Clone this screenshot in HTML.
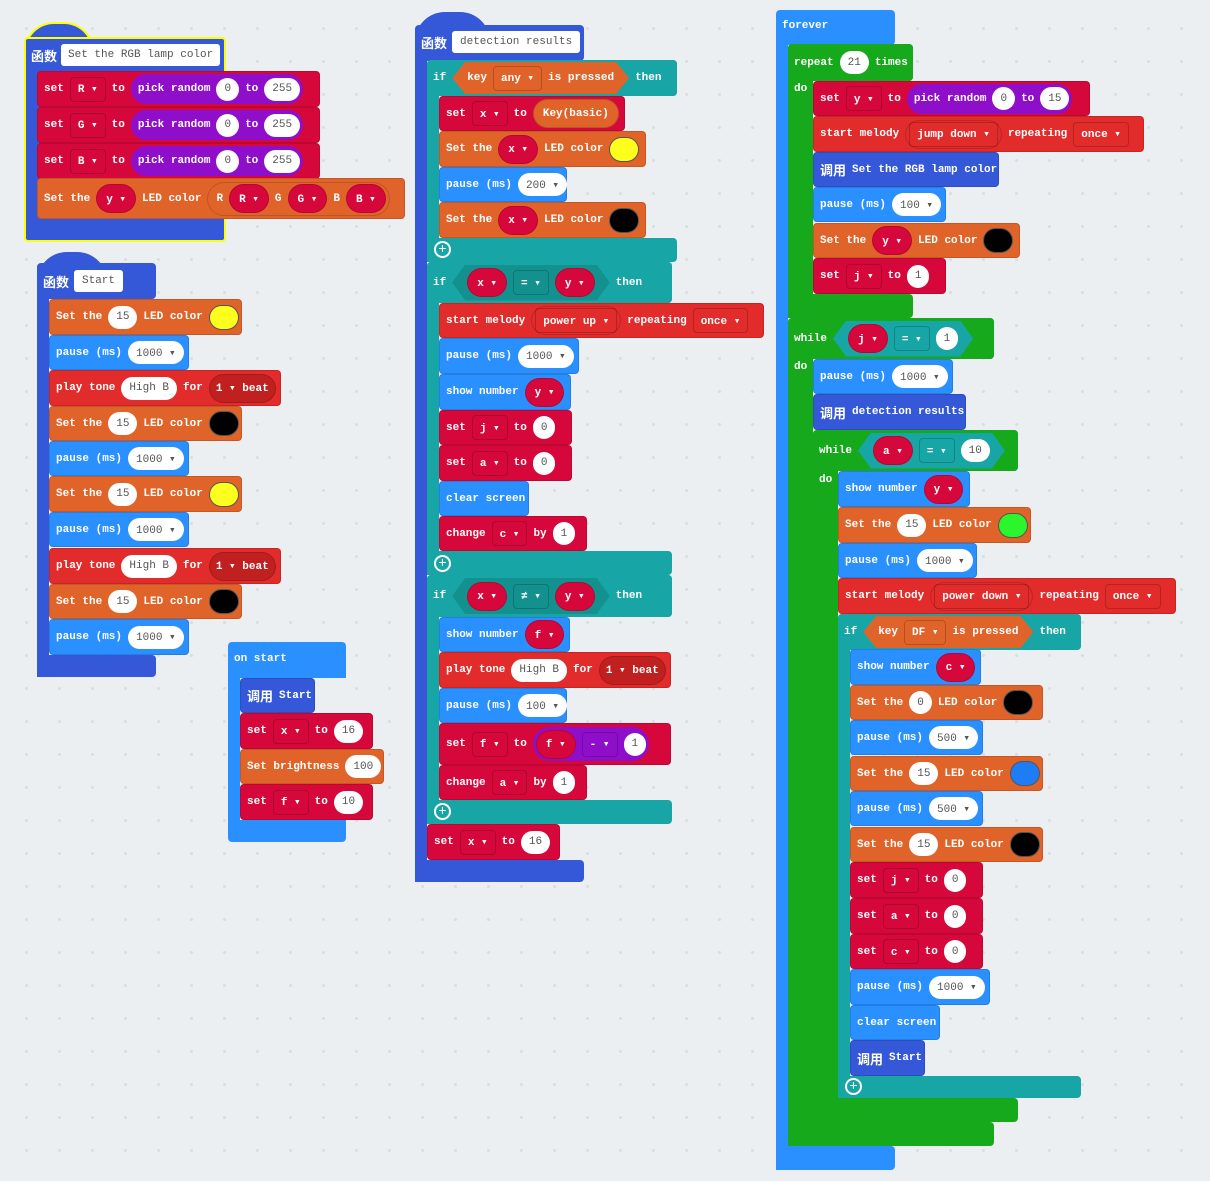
<!DOCTYPE html>
<html><head><meta charset="utf-8"><style>
body{margin:0;width:1210px;height:1181px;overflow:hidden;background:#eceff1;background-image:radial-gradient(circle,#d9dde0 1.2px,transparent 1.8px);background-size:33px 33px;background-position:10px 12px;position:relative;font-family:"Liberation Mono","Noto Sans CJK SC",monospace}
.b,.c{position:absolute;box-sizing:border-box;border-radius:4px}
.b{display:flex;align-items:center;gap:6px;padding:0 6px;color:#fff;font-weight:bold;font-size:11px;white-space:nowrap;border:1px solid rgba(0,0,0,.12)}
.b *{flex:none}
.red{background:#d6083b}.pur{background:#8f0ec9}.ora{background:#e0642a}.teal{background:#18a5a5}.lb{background:#2a8fff}.mel{background:#e22b2b}.fn{background:#3558d8}.grn{background:#16a91c}
.w{display:inline-flex;align-items:center;justify-content:center;background:#fff;color:#555;border-radius:12px;height:23px;padding:0 8px;font-weight:normal;min-width:8px;box-sizing:border-box}
.v{display:inline-flex;align-items:center;background:#d6083b;border-radius:15px;height:29px;padding:0 9px;border:1px solid rgba(0,0,0,.15);box-sizing:border-box}
.bt{background:#c02020;padding:0 6px;gap:4px}
.d{display:inline-flex;align-items:center;height:25px;padding:0 7px;border:1px solid rgba(0,0,0,.2);border-radius:4px;box-sizing:border-box}
.pk{display:inline-flex;align-items:center;gap:6px;background:#8f0ec9;border-radius:16px;height:30px;padding:0 3px 0 7px}
.hx{display:inline-flex;align-items:center;gap:6px;height:32px;padding:0 15px;clip-path:polygon(13px 0,calc(100% - 13px) 0,100% 50%,calc(100% - 13px) 100%,13px 100%,0 50%)}
.ci{display:inline-block;width:30px;height:25px;border-radius:13px;border:1px solid #555;box-sizing:border-box}
.cn{font-family:"Noto Sans CJK SC",sans-serif;font-size:13px}
.pl{display:inline-flex;width:13px;height:13px;border:2px solid #fff;border-radius:50%;align-items:center;justify-content:center;font-size:14px;line-height:1}
.lbl{position:absolute;color:#fff;font-weight:bold;font-size:11px}
</style></head><body>

<!-- Function 1 -->
<div class="c fn" style="left:24px;top:22px;width:70px;height:30px;border-radius:35px 35px 0 0;border:2px solid #ff0;border-bottom:none"></div>
<div class="c fn" style="left:24px;top:37px;width:202px;height:205px;border:2px solid #ff0"></div>
<div class="b fn" style="left:27px;top:40px;width:196px;height:30px;border:none;gap:4px;padding:0 4px"><span class="cn">函数</span><span class="w" style="border-radius:3px;height:22px;color:#555;padding:0 7px">Set the RGB lamp color</span></div>
<div class="b red" style="left:37px;top:71px;width:283px;height:36px">set <span class="d">R ▾</span> to <span class="pk">pick random <span class="w">0</span> to <span class="w">255</span></span></div>
<div class="b red" style="left:37px;top:107px;width:283px;height:36px">set <span class="d">G ▾</span> to <span class="pk">pick random <span class="w">0</span> to <span class="w">255</span></span></div>
<div class="b red" style="left:37px;top:143px;width:283px;height:36px">set <span class="d">B ▾</span> to <span class="pk">pick random <span class="w">0</span> to <span class="w">255</span></span></div>
<div class="b ora" style="left:37px;top:178px;width:368px;height:41px">Set the <span class="v">y ▾</span> LED color <span class="v" style="background:#e0642a;padding:0 3px 0 8px;height:34px;gap:6px;border-radius:17px">R <span class="v">R ▾</span> G <span class="v">G ▾</span> B <span class="v">B ▾</span></span></div>

<!-- Function Start -->
<div class="c fn" style="left:37px;top:252px;width:70px;height:30px;border-radius:35px 35px 0 0"></div>
<div class="c fn" style="left:37px;top:263px;width:119px;height:36px"></div>
<div class="lbl" style="left:43px;top:272px"><span class="cn">函数</span></div>
<div class="w" style="position:absolute;left:74px;top:270px;border-radius:3px;height:22px;font-size:11px">Start</div>
<div class="c fn" style="left:37px;top:290px;width:12px;height:387px;border-radius:0"></div>
<div class="c fn" style="left:37px;top:655px;width:119px;height:22px"></div>
<div class="b ora" style="left:49px;top:299px;width:193px;height:36px">Set the <span class="w">15</span> LED color <span class="ci" style="background:#ffff1e"></span></div>
<div class="b lb" style="left:49px;top:335px;width:140px;height:35px">pause (ms) <span class="w">1000 ▾</span></div>
<div class="b mel" style="left:49px;top:370px;width:232px;height:36px">play tone <span class="w">High B</span> for <span class="v bt">1 ▾ beat</span></div>
<div class="b ora" style="left:49px;top:406px;width:193px;height:35px">Set the <span class="w">15</span> LED color <span class="ci" style="background:#000"></span></div>
<div class="b lb" style="left:49px;top:441px;width:140px;height:35px">pause (ms) <span class="w">1000 ▾</span></div>
<div class="b ora" style="left:49px;top:476px;width:193px;height:36px">Set the <span class="w">15</span> LED color <span class="ci" style="background:#ffff1e"></span></div>
<div class="b lb" style="left:49px;top:512px;width:140px;height:35px">pause (ms) <span class="w">1000 ▾</span></div>
<div class="b mel" style="left:49px;top:548px;width:232px;height:36px">play tone <span class="w">High B</span> for <span class="v bt">1 ▾ beat</span></div>
<div class="b ora" style="left:49px;top:584px;width:193px;height:35px">Set the <span class="w">15</span> LED color <span class="ci" style="background:#000"></span></div>
<div class="b lb" style="left:49px;top:619px;width:140px;height:36px">pause (ms) <span class="w">1000 ▾</span></div>

<!-- on start -->
<div class="c lb" style="left:228px;top:642px;width:118px;height:200px"></div>
<div class="c" style="left:240px;top:678px;width:106px;height:142px;background:#eceff1;border-radius:0"></div>
<div class="lbl" style="left:234px;top:653px">on start</div>
<div class="b fn" style="left:240px;top:678px;width:75px;height:35px"><span class="cn">调用</span>Start</div>
<div class="b red" style="left:240px;top:713px;width:133px;height:36px">set <span class="d">x ▾</span> to <span class="w">16</span></div>
<div class="b ora" style="left:240px;top:749px;width:144px;height:35px">Set brightness <span class="w">100</span></div>
<div class="b red" style="left:240px;top:784px;width:133px;height:36px">set <span class="d">f ▾</span> to <span class="w">10</span></div>

<!-- detection results -->
<div class="c fn" style="left:415px;top:12px;width:75px;height:30px;border-radius:37px 37px 0 0"></div>
<div class="c fn" style="left:415px;top:25px;width:169px;height:36px"></div>
<div class="lbl" style="left:421px;top:33px"><span class="cn">函数</span></div>
<div class="w" style="position:absolute;left:452px;top:31px;border-radius:3px;height:22px;font-size:11px">detection results</div>
<div class="c fn" style="left:415px;top:50px;width:12px;height:832px;border-radius:0"></div>
<div class="c fn" style="left:415px;top:860px;width:169px;height:22px"></div>

<div class="c teal" style="left:427px;top:60px;width:250px;height:36px"></div>
<div class="c teal" style="left:427px;top:90px;width:12px;height:172px;border-radius:0"></div>
<div class="c teal" style="left:427px;top:238px;width:250px;height:24px"></div>
<div class="b teal" style="left:427px;top:60px;width:250px;height:36px;border:none">if <span class="hx ora">key <span class="d">any ▾</span> is pressed</span> then</div>
<div class="pl" style="position:absolute;left:434px;top:241px;color:#fff">+</div>
<div class="b red" style="left:439px;top:96px;width:186px;height:35px">set <span class="d">x ▾</span> to <span class="v" style="background:#e0642a">Key(basic)</span></div>
<div class="b ora" style="left:439px;top:131px;width:207px;height:36px">Set the <span class="v">x ▾</span> LED color <span class="ci" style="background:#ffff1e"></span></div>
<div class="b lb" style="left:439px;top:167px;width:128px;height:35px">pause (ms) <span class="w">200 ▾</span></div>
<div class="b ora" style="left:439px;top:202px;width:207px;height:36px">Set the <span class="v">x ▾</span> LED color <span class="ci" style="background:#000"></span></div>

<div class="c teal" style="left:427px;top:262px;width:245px;height:41px"></div>
<div class="c teal" style="left:427px;top:290px;width:12px;height:285px;border-radius:0"></div>
<div class="c teal" style="left:427px;top:551px;width:245px;height:24px"></div>
<div class="b teal" style="left:427px;top:262px;width:245px;height:41px;border:none">if <span class="hx" style="background:#13918f;height:36px"><span class="v">x ▾</span><span class="d">= ▾</span><span class="v">y ▾</span></span> then</div>
<div class="pl" style="position:absolute;left:434px;top:555px;color:#fff">+</div>
<div class="b mel" style="left:439px;top:303px;width:325px;height:35px">start melody <span class="v" style="background:#e22b2b;padding:0 3px"><span class="d">power up ▾</span></span> repeating <span class="d">once ▾</span></div>
<div class="b lb" style="left:439px;top:338px;width:140px;height:36px">pause (ms) <span class="w">1000 ▾</span></div>
<div class="b lb" style="left:439px;top:374px;width:132px;height:36px">show number <span class="v">y ▾</span></div>
<div class="b red" style="left:439px;top:410px;width:133px;height:35px">set <span class="d">j ▾</span> to <span class="w">0</span></div>
<div class="b red" style="left:439px;top:445px;width:133px;height:36px">set <span class="d">a ▾</span> to <span class="w">0</span></div>
<div class="b lb" style="left:439px;top:481px;width:90px;height:35px">clear screen</div>
<div class="b red" style="left:439px;top:516px;width:148px;height:35px">change <span class="d">c ▾</span> by <span class="w">1</span></div>

<div class="c teal" style="left:427px;top:575px;width:245px;height:42px"></div>
<div class="c teal" style="left:427px;top:600px;width:12px;height:224px;border-radius:0"></div>
<div class="c teal" style="left:427px;top:800px;width:245px;height:24px"></div>
<div class="b teal" style="left:427px;top:575px;width:245px;height:42px;border:none">if <span class="hx" style="background:#13918f;height:36px"><span class="v">x ▾</span><span class="d">≠ ▾</span><span class="v">y ▾</span></span> then</div>
<div class="pl" style="position:absolute;left:434px;top:803px;color:#fff">+</div>
<div class="b lb" style="left:439px;top:617px;width:131px;height:35px">show number <span class="v">f ▾</span></div>
<div class="b mel" style="left:439px;top:652px;width:232px;height:36px">play tone <span class="w">High B</span> for <span class="v bt">1 ▾ beat</span></div>
<div class="b lb" style="left:439px;top:688px;width:128px;height:35px">pause (ms) <span class="w">100 ▾</span></div>
<div class="b red" style="left:439px;top:723px;width:232px;height:42px">set <span class="d">f ▾</span> to <span class="pk" style="height:34px;padding:0 3px;border-radius:17px"><span class="v">f ▾</span><span class="d">- ▾</span><span class="w">1</span></span></div>
<div class="b red" style="left:439px;top:765px;width:148px;height:35px">change <span class="d">a ▾</span> by <span class="w">1</span></div>
<div class="b red" style="left:427px;top:824px;width:133px;height:36px">set <span class="d">x ▾</span> to <span class="w">16</span></div>

<!-- forever -->
<div class="c lb" style="left:776px;top:10px;width:119px;height:35px"></div>
<div class="lbl" style="left:782px;top:20px">forever</div>
<div class="c lb" style="left:776px;top:40px;width:12px;height:1130px;border-radius:0"></div>
<div class="c lb" style="left:776px;top:1146px;width:119px;height:24px"></div>

<div class="c grn" style="left:788px;top:44px;width:125px;height:37px"></div>
<div class="c grn" style="left:788px;top:75px;width:25px;height:243px;border-radius:0"></div>
<div class="c grn" style="left:788px;top:294px;width:125px;height:24px"></div>
<div class="b grn" style="left:788px;top:44px;width:125px;height:37px;border:none">repeat <span class="w">21</span> times</div>
<div class="lbl" style="left:794px;top:83px">do</div>
<div class="b red" style="left:813px;top:81px;width:277px;height:35px">set <span class="d">y ▾</span> to <span class="pk">pick random <span class="w">0</span> to <span class="w">15</span></span></div>
<div class="b mel" style="left:813px;top:116px;width:331px;height:36px">start melody <span class="v" style="background:#e22b2b;padding:0 3px"><span class="d">jump down ▾</span></span> repeating <span class="d">once ▾</span></div>
<div class="b fn" style="left:813px;top:152px;width:186px;height:35px"><span class="cn">调用</span>Set the RGB lamp color</div>
<div class="b lb" style="left:813px;top:187px;width:133px;height:35px">pause (ms) <span class="w">100 ▾</span></div>
<div class="b ora" style="left:813px;top:223px;width:207px;height:35px">Set the <span class="v">y ▾</span> LED color <span class="ci" style="background:#000"></span></div>
<div class="b red" style="left:813px;top:258px;width:133px;height:36px">set <span class="d">j ▾</span> to <span class="w">1</span></div>

<div class="c grn" style="left:788px;top:318px;width:206px;height:41px"></div>
<div class="c grn" style="left:788px;top:350px;width:25px;height:796px;border-radius:0"></div>
<div class="c grn" style="left:788px;top:1122px;width:206px;height:24px"></div>
<div class="b grn" style="left:788px;top:318px;width:206px;height:41px;border:none">while <span class="hx teal" style="height:36px"><span class="v">j ▾</span><span class="d">= ▾</span><span class="w">1</span></span></div>
<div class="lbl" style="left:794px;top:361px">do</div>
<div class="b lb" style="left:813px;top:359px;width:140px;height:35px">pause (ms) <span class="w">1000 ▾</span></div>
<div class="b fn" style="left:813px;top:394px;width:153px;height:36px"><span class="cn">调用</span>detection results</div>

<div class="c grn" style="left:813px;top:430px;width:205px;height:41px"></div>
<div class="c grn" style="left:813px;top:460px;width:25px;height:662px;border-radius:0"></div>
<div class="c grn" style="left:813px;top:1098px;width:205px;height:24px"></div>
<div class="b grn" style="left:813px;top:430px;width:205px;height:41px;border:none">while <span class="hx teal" style="height:36px"><span class="v">a ▾</span><span class="d">= ▾</span><span class="w">10</span></span></div>
<div class="lbl" style="left:819px;top:474px">do</div>
<div class="b lb" style="left:838px;top:471px;width:132px;height:36px">show number <span class="v">y ▾</span></div>
<div class="b ora" style="left:838px;top:507px;width:193px;height:36px">Set the <span class="w">15</span> LED color <span class="ci" style="background:#2bf52b"></span></div>
<div class="b lb" style="left:838px;top:543px;width:139px;height:35px">pause (ms) <span class="w">1000 ▾</span></div>
<div class="b mel" style="left:838px;top:578px;width:338px;height:36px">start melody <span class="v" style="background:#e22b2b;padding:0 3px"><span class="d">power down ▾</span></span> repeating <span class="d">once ▾</span></div>

<div class="c teal" style="left:838px;top:614px;width:243px;height:36px"></div>
<div class="c teal" style="left:838px;top:640px;width:12px;height:458px;border-radius:0"></div>
<div class="c teal" style="left:838px;top:1076px;width:243px;height:22px"></div>
<div class="b teal" style="left:838px;top:614px;width:243px;height:36px;border:none">if <span class="hx ora">key <span class="d">DF ▾</span> is pressed</span> then</div>
<div class="pl" style="position:absolute;left:845px;top:1078px;color:#fff">+</div>
<div class="b lb" style="left:850px;top:649px;width:131px;height:36px">show number <span class="v">c ▾</span></div>
<div class="b ora" style="left:850px;top:685px;width:193px;height:35px">Set the <span class="w">0</span> LED color <span class="ci" style="background:#000"></span></div>
<div class="b lb" style="left:850px;top:720px;width:133px;height:35px">pause (ms) <span class="w">500 ▾</span></div>
<div class="b ora" style="left:850px;top:756px;width:193px;height:35px">Set the <span class="w">15</span> LED color <span class="ci" style="background:#1e7cf5"></span></div>
<div class="b lb" style="left:850px;top:791px;width:133px;height:35px">pause (ms) <span class="w">500 ▾</span></div>
<div class="b ora" style="left:850px;top:827px;width:193px;height:35px">Set the <span class="w">15</span> LED color <span class="ci" style="background:#000"></span></div>
<div class="b red" style="left:850px;top:862px;width:133px;height:36px">set <span class="d">j ▾</span> to <span class="w">0</span></div>
<div class="b red" style="left:850px;top:898px;width:133px;height:36px">set <span class="d">a ▾</span> to <span class="w">0</span></div>
<div class="b red" style="left:850px;top:934px;width:133px;height:35px">set <span class="d">c ▾</span> to <span class="w">0</span></div>
<div class="b lb" style="left:850px;top:969px;width:140px;height:36px">pause (ms) <span class="w">1000 ▾</span></div>
<div class="b lb" style="left:850px;top:1005px;width:90px;height:35px">clear screen</div>
<div class="b fn" style="left:850px;top:1040px;width:75px;height:36px"><span class="cn">调用</span>Start</div>

</body></html>
